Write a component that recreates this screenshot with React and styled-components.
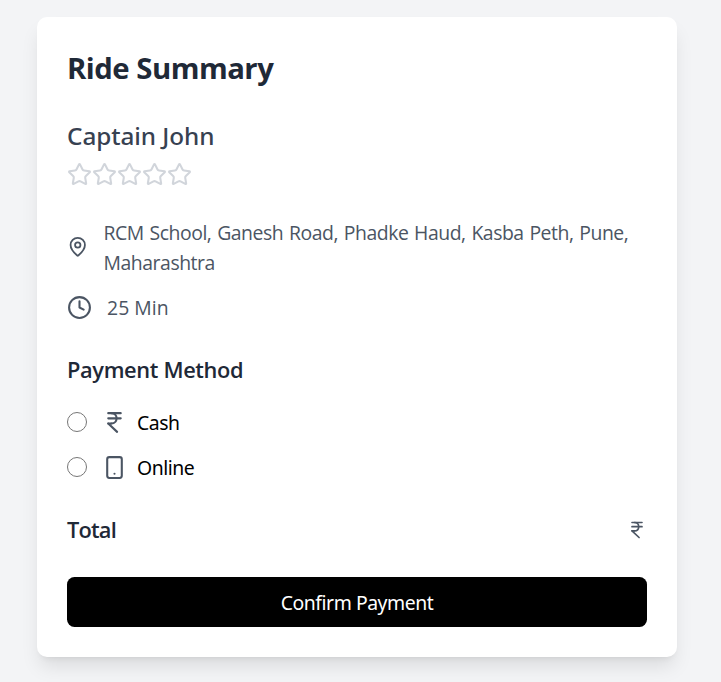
import React from 'react';
import styled, { createGlobalStyle } from 'styled-components';
import { Star, MapPin, Clock, IndianRupee, Smartphone } from 'lucide-react';

const GlobalStyle = createGlobalStyle`
  *, *::before, *::after { box-sizing: border-box; }
  body { margin: 0; background: #f3f4f6; font-family: 'Noto Sans', 'Open Sans', sans-serif; }
  h1, h2, h3, p { margin: 0; }
`;

const Page = styled.main`
  min-height: 682px;
  padding: 17px 44px 25px 37px;
  overflow: hidden;
  background: #f3f4f6;
`;

const Card = styled.section`
  height: 640px;
  padding: 30px;
  border-radius: 10px;
  background: #fff;
  box-shadow: 0 12.5px 18.75px -3.75px rgba(0, 0, 0, 0.1), 0 5px 7.5px -5px rgba(0, 0, 0, 0.1);
`;

const Title = styled.h1`
  margin-bottom: 30px;
  font-family: 'Open Sans', 'Noto Sans', sans-serif;
  font-size: 29.3px;
  line-height: 42px;
  height: 40px;
  font-weight: 700;
  letter-spacing: -0.5px;
  color: #1f2937;
  white-space: nowrap;
`;

const Captain = styled.h2`
  height: 35px;
  font-size: 24.3px;
  line-height: 37px;
  font-weight: 500;
  letter-spacing: -0.05px;
  color: #374151;
`;

const Stars = styled.div`
  display: flex;
  margin: 10px 0 30px;
  color: #d1d5db;
`;

const Details = styled.div`
  display: grid;
  gap: 15px;
  margin-bottom: 30px;
`;

const Detail = styled.div`
  display: flex;
  align-items: center;
  gap: 15px;
  color: #4b5563;
  svg { flex-shrink: 0; }
`;

const DetailText = styled.p`
  padding-top: 1px;
  margin-bottom: -1px;
  font-family: 'Open Sans', 'Noto Sans', sans-serif;
  font-size: 19.4px;
  line-height: 30px;
  letter-spacing: ${(p) => p.$spacing || '-0.45px'};
  word-spacing: ${(p) => (p.$spacing ? '0' : '1.15px')};
  white-space: nowrap;
`;

const Heading = styled.h3`
  height: 35px;
  font-family: 'Open Sans', 'Noto Sans', sans-serif;
  font-size: 21.8px;
  line-height: 36px;
  font-weight: 600;
  letter-spacing: ${(p) => p.$spacing || '-0.35px'};
  color: #1f2937;
`;

const Options = styled.div`
  display: grid;
  gap: 15px;
  margin: 20px 0 30px;
`;

const Option = styled.label`
  display: flex;
  align-items: center;
  height: 30px;
  font-size: 19.4px;
  color: #000;
  svg { margin: 0 10px 0 15px; color: #4b5563; }
`;

const Radio = styled.input`
  appearance: none;
  width: 20px;
  height: 20px;
  margin: 0;
  border: 1.25px solid #767676;
  border-radius: 50%;
  background: #fff;
`;

const OptionText = styled.span`
  line-height: 30px;
  padding-top: 1px;
  letter-spacing: -0.45px;
`;

const Total = styled.div`
  display: flex;
  justify-content: space-between;
  align-items: center;
  height: 35px;
  margin-bottom: 30px;
  color: #4b5563;
`;

const Confirm = styled.button`
  width: 100%;
  height: 50px;
  padding: 2px 0 0;
  border: 0;
  border-radius: 7.5px;
  background: #000;
  color: #fff;
  font: 400 19.4px/30px 'Noto Sans', 'Open Sans', sans-serif;
  letter-spacing: -0.45px;
`;

export default function App() {
  return (
    <>
      <GlobalStyle />
      <Page>
        <Card>
          <Title>Ride Summary</Title>
          <Captain>Captain John</Captain>
          <Stars>
            {[1, 2, 3, 4, 5].map((n) => <Star key={n} size={25} />)}
          </Stars>
          <Details>
            <Detail>
              <MapPin size={21.5} />
              <DetailText>RCM School, Ganesh Road, Phadke Haud, Kasba Peth, Pune,<br />Maharashtra</DetailText>
            </Detail>
            <Detail>
              <Clock size={25} />
              <DetailText $spacing="0.05px">25 Min</DetailText>
            </Detail>
          </Details>
          <Heading>Payment Method</Heading>
          <Options>
            <Option><Radio type="radio" name="payment" /><IndianRupee size={25} /><OptionText>Cash</OptionText></Option>
            <Option><Radio type="radio" name="payment" /><Smartphone size={25} /><OptionText>Online</OptionText></Option>
          </Options>
          <Total>
            <Heading $spacing="-0.8px">Total</Heading>
            <IndianRupee size={20} />
          </Total>
          <Confirm>Confirm Payment</Confirm>
        </Card>
      </Page>
    </>
  );
}
